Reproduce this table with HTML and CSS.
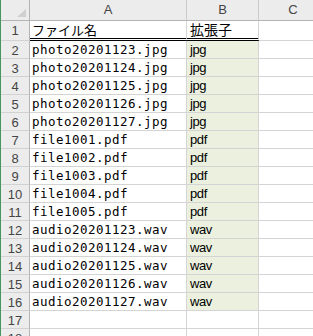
FILE: index.html
```html
<!DOCTYPE html>
<html lang="ja">
<head>
<meta charset="utf-8">
<link rel="stylesheet" href="styles.css">
</head>
<body>
<div class="sheet">
  <div class="row hdr">
    <div class="corner"><svg width="28" height="20" viewBox="0 0 28 20"><polygon points="25,9 25,17 16,17" fill="#cfcfcf"/></svg></div>
    <div class="ch col-a">A</div>
    <div class="ch col-b">B</div>
    <div class="ch col-c">C</div>
  </div>
  <div class="row r1">
    <div class="rh">1</div>
    <div class="c col-a jp dbl">ファイル名</div>
    <div class="c col-b jp2 dbl">拡張子</div>
    <div class="c col-c"></div>
  </div>
  <div class="row"><div class="rh">2</div><div class="c col-a mono">photo20201123.jpg</div><div class="c col-b ext fill">jpg</div><div class="c col-c"></div></div>
  <div class="row"><div class="rh">3</div><div class="c col-a mono">photo20201124.jpg</div><div class="c col-b ext fill">jpg</div><div class="c col-c"></div></div>
  <div class="row"><div class="rh">4</div><div class="c col-a mono">photo20201125.jpg</div><div class="c col-b ext fill">jpg</div><div class="c col-c"></div></div>
  <div class="row"><div class="rh">5</div><div class="c col-a mono">photo20201126.jpg</div><div class="c col-b ext fill">jpg</div><div class="c col-c"></div></div>
  <div class="row"><div class="rh">6</div><div class="c col-a mono">photo20201127.jpg</div><div class="c col-b ext fill">jpg</div><div class="c col-c"></div></div>
  <div class="row"><div class="rh">7</div><div class="c col-a mono">file1001.pdf</div><div class="c col-b ext fill">pdf</div><div class="c col-c"></div></div>
  <div class="row"><div class="rh">8</div><div class="c col-a mono">file1002.pdf</div><div class="c col-b ext fill">pdf</div><div class="c col-c"></div></div>
  <div class="row"><div class="rh">9</div><div class="c col-a mono">file1003.pdf</div><div class="c col-b ext fill">pdf</div><div class="c col-c"></div></div>
  <div class="row"><div class="rh">10</div><div class="c col-a mono">file1004.pdf</div><div class="c col-b ext fill">pdf</div><div class="c col-c"></div></div>
  <div class="row"><div class="rh">11</div><div class="c col-a mono">file1005.pdf</div><div class="c col-b ext fill">pdf</div><div class="c col-c"></div></div>
  <div class="row"><div class="rh">12</div><div class="c col-a mono">audio20201123.wav</div><div class="c col-b ext fill">wav</div><div class="c col-c"></div></div>
  <div class="row"><div class="rh">13</div><div class="c col-a mono">audio20201124.wav</div><div class="c col-b ext fill">wav</div><div class="c col-c"></div></div>
  <div class="row"><div class="rh">14</div><div class="c col-a mono">audio20201125.wav</div><div class="c col-b ext fill">wav</div><div class="c col-c"></div></div>
  <div class="row"><div class="rh">15</div><div class="c col-a mono">audio20201126.wav</div><div class="c col-b ext fill">wav</div><div class="c col-c"></div></div>
  <div class="row"><div class="rh">16</div><div class="c col-a mono">audio20201127.wav</div><div class="c col-b ext fill">wav</div><div class="c col-c"></div></div>
  <div class="row"><div class="rh">17</div><div class="c col-a"></div><div class="c col-b"></div><div class="c col-c"></div></div>
  <div class="row"><div class="rh">18</div><div class="c col-a"></div><div class="c col-b"></div><div class="c col-c"></div></div>
</div>
</body>
</html>
```
FILE: styles.css
```css
html, body {
  margin: 0;
  padding: 0;
  background: #ffffff;
  overflow: hidden;
}
body {
  width: 313px;
  height: 336px;
}
.sheet {
  width: 312px;
  height: 336px;
  border-left: 1px solid #4a9460;
  overflow: hidden;
  font-family: "Liberation Sans", Arial, sans-serif;
}
.row {
  display: flex;
  height: 18px;
}
.row > div {
  box-sizing: border-box;
  flex: none;
  height: 100%;
  white-space: nowrap;
}
.hdr {
  height: 21px;
}
.r1 {
  height: 20px;
}
.corner,
.rh {
  width: 29px;
  background: #ececec;
  border-right: 1px solid #b4b4b4;
}
.corner {
  border-bottom: 1px solid #b4b4b4;
}
.corner svg {
  display: block;
}
.rh {
  border-bottom: 1px solid #d2d2d2;
  text-align: center;
  font-size: 13px;
  line-height: 17px;
  color: #444;
  padding-top: 1px;
}
.r1 .rh {
  line-height: 18px;
}
.ch {
  background: #ececec;
  border-right: 1px solid #cbcbcb;
  border-bottom: 1px solid #b4b4b4;
  text-align: center;
  font-size: 13px;
  line-height: 20px;
  color: #444;
}
.col-a { width: 157px; }
.col-b { width: 72px; }
.col-c { width: 69px; }
.c {
  border-right: 1px solid #d4d4d4;
  border-bottom: 1px solid #d4d4d4;
  color: #000;
  line-height: 17px;
}
.col-a.c { padding-left: 2px; }
.col-b.c { padding-left: 3px; }
.dbl {
  border-bottom: 3px double #000;
}
.jp {
  font-family: "Noto Sans CJK JP", sans-serif;
  font-size: 13px;
  line-height: 17px;
}
.jp2 {
  font-family: "Noto Sans CJK JP", sans-serif;
  font-size: 14px;
  line-height: 17px;
}
.mono {
  font-family: "DejaVu Sans Mono", monospace;
  font-size: 12.5px;
  letter-spacing: 0.47px;
}
.ext {
  font-family: "Liberation Sans", Arial, sans-serif;
  font-size: 13px;
  letter-spacing: -0.4px;
}
.fill {
  background: #ebf1de;
}
```
